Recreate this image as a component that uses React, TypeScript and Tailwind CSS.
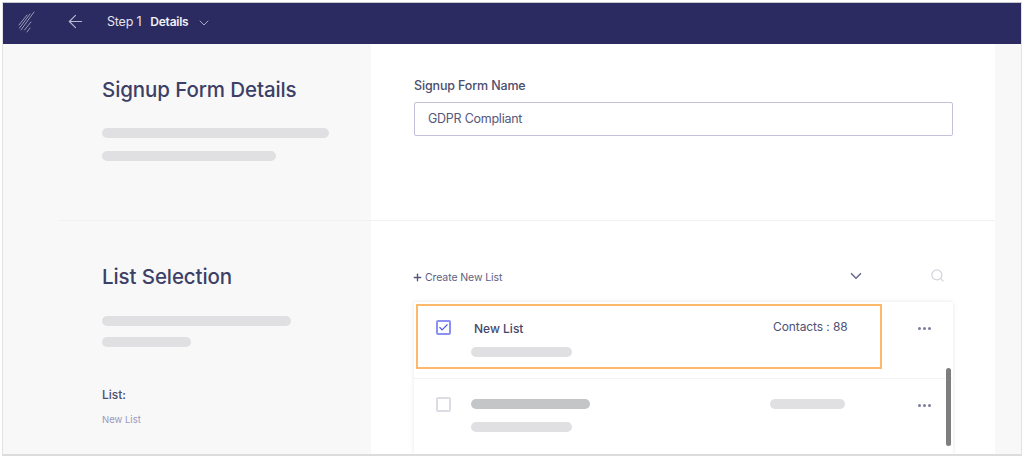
import { ArrowLeft, ChevronDown, Search, Check, Plus } from "lucide-react";

const font = { fontFamily: "Inter, 'Liberation Sans', sans-serif" };

function Bar({ w, dark }: { w: string; dark?: boolean }) {
  return <div className={`h-[10px] rounded-full ${w} ${dark ? "bg-[#c4c5c7]" : "bg-[#e0e0e3]"}`} />;
}

function Dots() {
  return (
    <div className="flex gap-[2px]">
      <span className="w-[3px] h-[3px] rounded-full bg-[#7b7d9e]" />
      <span className="w-[3px] h-[3px] rounded-full bg-[#7b7d9e]" />
      <span className="w-[3px] h-[3px] rounded-full bg-[#7b7d9e]" />
    </div>
  );
}

export default function App() {
  return (
    <div style={font} className="w-[1024px] h-[457px] bg-white overflow-hidden px-[2px] pt-[2px] pb-[1px]">
      <div className="h-full border border-t-[#c9cad0] border-x-[#e2e2e4] border-b-[#dcdcde] bg-[#f8f8f9] flex flex-col overflow-hidden border-b-2 border-x-[1px]">
        <header className="h-[41px] shrink-0 bg-[#2b2a61] flex items-center text-white pb-[2px]">
          <svg className="ml-[13px] -mt-[2px] opacity-70" width="22" height="24" viewBox="0 0 22 24" fill="none" stroke="#c8c8dc" strokeWidth="1" strokeLinecap="round">
            <path d="M3 15 L11 5" />
            <path d="M3.5 18 L14 4" />
            <path d="M5 20 L18 2" />
            <path d="M8.5 20 L15 12" />
            <path d="M11 22 L14 18" />
          </svg>
          <ArrowLeft className="ml-[27px] -mt-[3px] text-[#b9b9d0]" size={21} strokeWidth={1.3} />
          <div className="ml-[21px] flex items-baseline">
            <span className="text-[12.5px] text-[#e4e4ee] tracking-[-0.2px]">Step 1</span>
            <span className="ml-[9px] text-[12px] font-semibold text-[#f1f1f6] tracking-[-0.25px]">Details</span>
          </div>
          <ChevronDown className="ml-[8px] text-[#a9a9c6]" size={16} strokeWidth={1.5} />
        </header>

        <section className="h-[177px] shrink-0 flex">
          <div className="w-[368px] pl-[99px] pt-[32px]">
            <h1 className="text-[20.5px] leading-[28px] font-medium text-[#3d4066] tracking-[-0.1px]">Signup Form Details</h1>
            <div className="mt-[24px] flex flex-col gap-[13px]">
              <Bar w="w-[227px]" />
              <Bar w="w-[174px]" />
            </div>
          </div>
          <div className="w-[624px] bg-white pl-[43px] pt-[34px] border-b border-[#f1f1f3]">
            <div className="text-[12.5px] leading-[16px] font-medium text-[#4c4e6e] tracking-[-0.15px]">Signup Form Name</div>
            <div className="mt-[8px] w-[539px] h-[34px] border border-[#c3c1da] rounded-[2px] flex items-center pl-[13px] text-[12.5px] text-[#55577a] tracking-[-0.25px]">
              GDPR Compliant
            </div>
          </div>
        </section>

        <section className="flex-1 flex min-h-0">
          <div className="w-[368px] pl-[99px] pt-[42px] relative">
            <div className="absolute left-[57px] right-0 top-[-1px] h-px bg-[#f1f1f3]" />
            <h2 className="text-[20.5px] leading-[28px] font-medium text-[#3d4066] tracking-[-0.1px]">List Selection</h2>
            <div className="mt-[25px] flex flex-col gap-[11px]">
              <Bar w="w-[189px]" />
              <Bar w="w-[89px]" />
            </div>
            <div className="mt-[40px] text-[12px] leading-[16px] font-medium text-[#4c4e6e]">List:</div>
            <div className="mt-[11px] text-[9.5px] leading-[12px] text-[#9899b8]">New List</div>
          </div>

          <div className="w-[624px] bg-white pl-[43px] pt-[48px] flex flex-col min-h-0">
            <div className="w-[539px] h-[17px] flex items-center shrink-0">
              <Plus className="text-[#55577a] -ml-[2px]" size={11} strokeWidth={3} />
              <span className="ml-[2px] text-[10.5px] text-[#5d5f80] tracking-[-0.1px]">Create New List</span>
              <ChevronDown className="ml-[345px] -mt-[4px] text-[#6d6f92]" size={18} strokeWidth={2.2} />
              <Search className="ml-[65px] -mt-[5px] text-[#d3d3dc]" size={15} strokeWidth={2} />
            </div>
            <div className="relative mt-[16px] w-[539px] flex-1 min-h-0 bg-white shadow-[0_0_4px_rgba(0,0,0,0.10)] overflow-hidden">
              <div className="h-[77px] border-b border-[#f3f3f5] flex pl-[22px] pt-[17px]">
                <div className="w-[15px] h-[15px] border-2 border-[#8b91f2] rounded-[2px] flex items-center justify-center shrink-0 mt-[1px]">
                  <Check className="text-[#4d57e8]" size={11} strokeWidth={2.5} />
                </div>
                <div className="ml-[23px] w-[300px]">
                  <div className="text-[12px] leading-[16px] font-medium text-[#45476a] mt-[2px]">New List</div>
                  <div className="mt-[10px] -ml-[3px]"><Bar w="w-[101px]" /></div>
                </div>
                <div className="-ml-[1px] text-[12px] leading-[16px] text-[#4f5175] w-[110px] tracking-[-0.1px]">Contacts : 88</div>
                <div className="ml-[35px] mt-[8px]"><Dots /></div>
              </div>
              <div className="flex pl-[22px] pt-[18px]">
                <div className="w-[15px] h-[15px] border-2 border-[#dcdce5] rounded-[2px] shrink-0" />
                <div className="ml-[20px] w-[299px]">
                  <div className="mt-[2px]"><Bar w="w-[119px]" dark /></div>
                  <div className="mt-[13px]"><Bar w="w-[101px]" /></div>
                </div>
                <div className="mt-[2px] w-[110px]"><Bar w="w-[75px]" /></div>
                <div className="ml-[38px] mt-[7px]"><Dots /></div>
              </div>
              <div className="absolute right-[2px] top-[66px] w-[5px] h-[78px] rounded-full bg-[#7e7e7e]" />
              <div className="absolute left-[2px] top-[2px] w-[466px] h-[65px] border-2 border-[#fdb96b]" />
            </div>
          </div>
        </section>
      </div>
    </div>
  );
}
